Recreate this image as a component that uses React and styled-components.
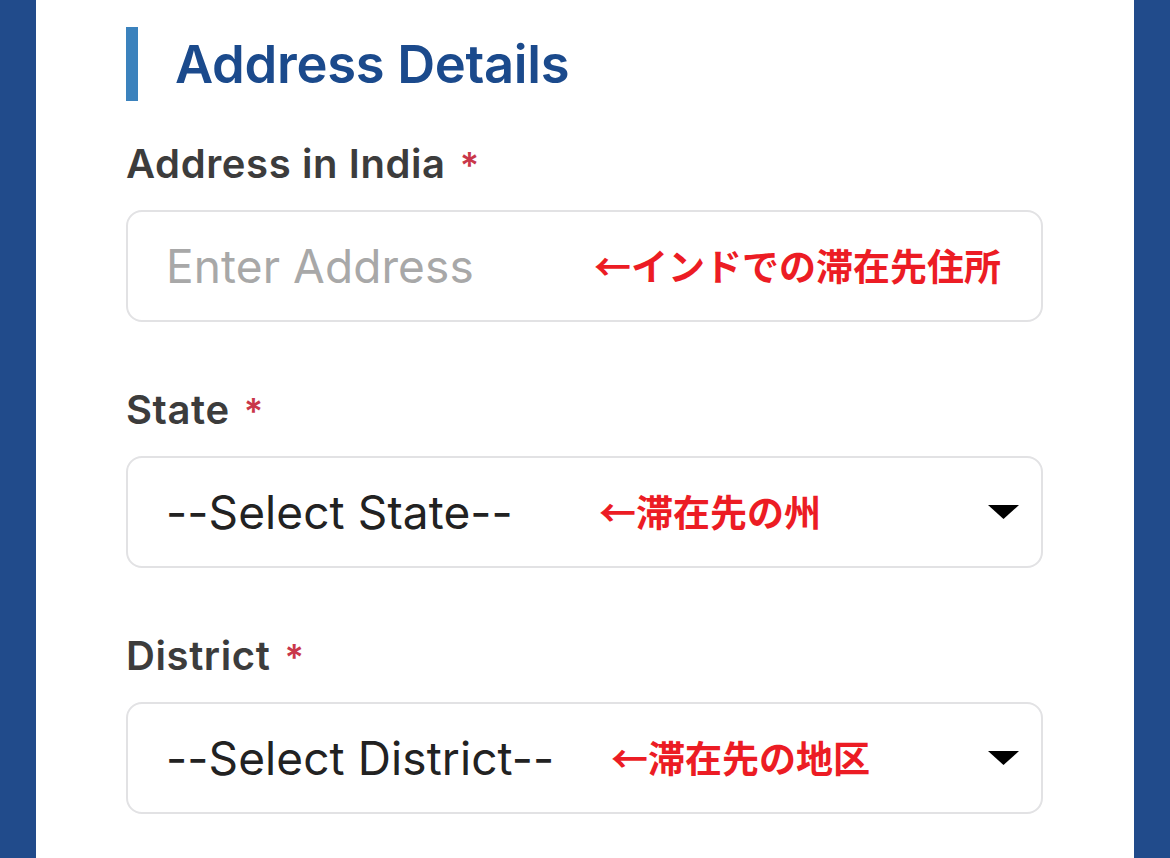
import React from 'react';
import styled, { createGlobalStyle } from 'styled-components';

const GlobalStyle = createGlobalStyle`
  html, body {
    margin: 0;
    padding: 0;
    background: #214b8b;
    font-family: Inter, "Noto Sans", "Noto Sans CJK JP", sans-serif;
  }
`

const PageStyled = styled.div`
  height: 858px;
  overflow: hidden;
  background: #214b8b;
  padding: 0 36px;
`
const PanelStyled = styled.div`
  height: 100%;
  background: #fff;
  padding: 27px 91px 0 90px;
`
const SectionHeaderStyled = styled.div`
  display: flex;
  align-items: center;
  height: 74px;
  border-left: 12px solid #3b82bd;
  padding-left: 37px;
`
const SectionTitleStyled = styled.h2`
  margin: 0;
  font-size: 52.5px;
  font-weight: 600;
  color: #1b4a8c;
  letter-spacing: -0.3px;
`
const FieldStyled = styled.div`
  margin-top: ${p => p.first ? '41px' : '66px'};
`
const LabelStyled = styled.label`
  display: block;
  font-size: 40px;
  line-height: 44px;
  height: 44px;
  font-weight: 600;
  letter-spacing: 0.6px;
  color: #3c3c3c;
  margin-bottom: 24px;
`
const RequiredStyled = styled.span`
  color: #c9374a;
  margin-left: 14px;
  font-size: 36px;
  line-height: 1;
`
const BoxStyled = styled.div`
  position: relative;
  display: flex;
  align-items: center;
  height: 112px;
  box-sizing: border-box;
  border: 2.5px solid #e2e2e4;
  border-radius: 16px;
  padding: 0 22px 0 38px;
`
const ValueStyled = styled.span`
  flex: 1;
  font-size: 46px;
  font-weight: 400;
  letter-spacing: 0.1px;
  color: ${p => p.placeholder ? '#a8a8a8' : '#222'};
`
const CaretStyled = styled.svg`
  width: 31px;
  height: 14px;
`
const NoteStyled = styled.span`
  position: absolute;
  left: ${p => p.left}px;
  top: 50%;
  transform: translateY(-52%);
  font-family: "Noto Sans CJK JP", sans-serif;
  font-weight: 700;
  font-size: 37px;
  color: #ec1c24;
  white-space: nowrap;
`

const Caret = () => (
  <CaretStyled viewBox="0 0 31 14">
    <path d="M0 0H31L15.5 14Z" fill="#000" />
  </CaretStyled>
)

const fields = [
  { label: 'Address in India', value: 'Enter Address', placeholder: true, note: '←インドでの滞在先住所', noteLeft: 466 },
  { label: 'State', value: '--Select State--', select: true, note: '←滞在先の州', noteLeft: 471 },
  { label: 'District', value: '--Select District--', select: true, note: '←滞在先の地区', noteLeft: 483 },
]

const App = () => {
  return (
    <>
      <GlobalStyle />
      <PageStyled>
        <PanelStyled>
          <SectionHeaderStyled>
            <SectionTitleStyled>Address Details</SectionTitleStyled>
          </SectionHeaderStyled>
          {fields.map((f, i) => (
            <FieldStyled key={f.label} first={i === 0}>
              <LabelStyled>
                {f.label}
                <RequiredStyled>*</RequiredStyled>
              </LabelStyled>
              <BoxStyled>
                <ValueStyled placeholder={f.placeholder}>{f.value}</ValueStyled>
                {f.select && <Caret />}
                <NoteStyled left={f.noteLeft}>{f.note}</NoteStyled>
              </BoxStyled>
            </FieldStyled>
          ))}
        </PanelStyled>
      </PageStyled>
    </>
  )
}

export default App
